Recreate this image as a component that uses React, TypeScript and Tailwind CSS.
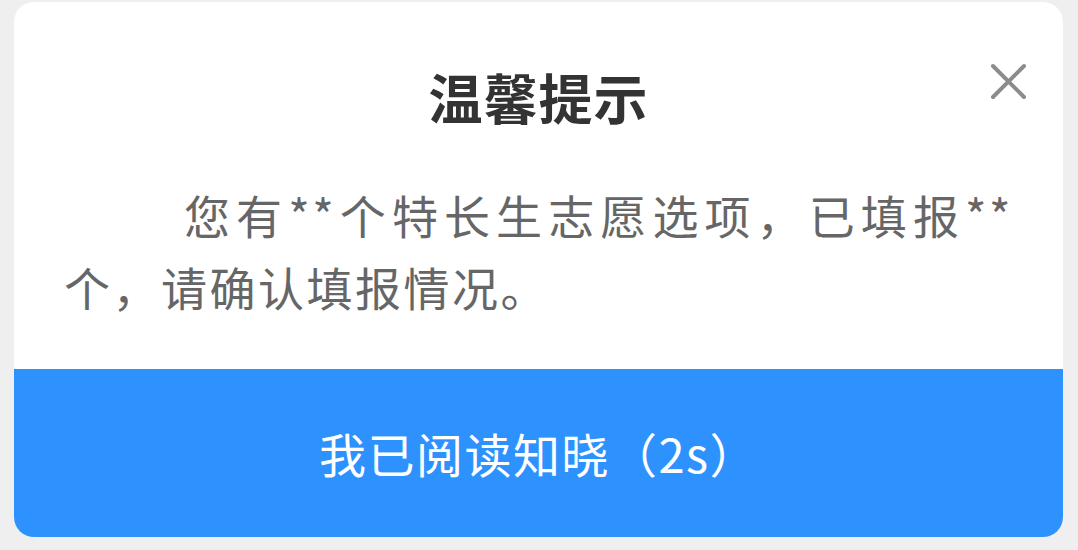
import React from "react";

export default function App() {
  return (
    <div
      className="w-[1078px] h-[550px] bg-[#efefef] pt-[2px] pl-[14px]"
      style={{ fontFamily: '"Noto Sans CJK SC", "Noto Sans", sans-serif' }}
    >
      <div className="relative w-[1049px] h-[535px] bg-white rounded-[20px] overflow-hidden flex flex-col">
        <button className="absolute right-[36px] top-[61px] w-[37px] h-[37px]" aria-label="关闭">
          <svg viewBox="0 0 37 37" className="w-full h-full">
            <path d="M3 3 L34 34 M34 3 L3 34" stroke="#8c8c8c" strokeWidth="4" strokeLinecap="round" fill="none" />
          </svg>
        </button>
        <div className="pt-[68px] text-center text-[54px] leading-[54px] font-bold text-[#333333] tracking-[1px]">
          温馨提示
        </div>
        <div className="mt-[54px] px-[50px] text-[46px] leading-[72px] text-[#666666] tracking-[2.5px]">
          <div className="pl-[120px] text-justify [text-align-last:justify]">您有**个特长生志愿选项，已填报**</div>
          <div>个，请确认填报情况。</div>
        </div>
        <button className="mt-auto h-[168px] w-full bg-[#2e92fe] text-white text-[47px] tracking-[1.5px] flex items-center justify-center">
          我已阅读知晓（2s）
        </button>
      </div>
    </div>
  );
}
